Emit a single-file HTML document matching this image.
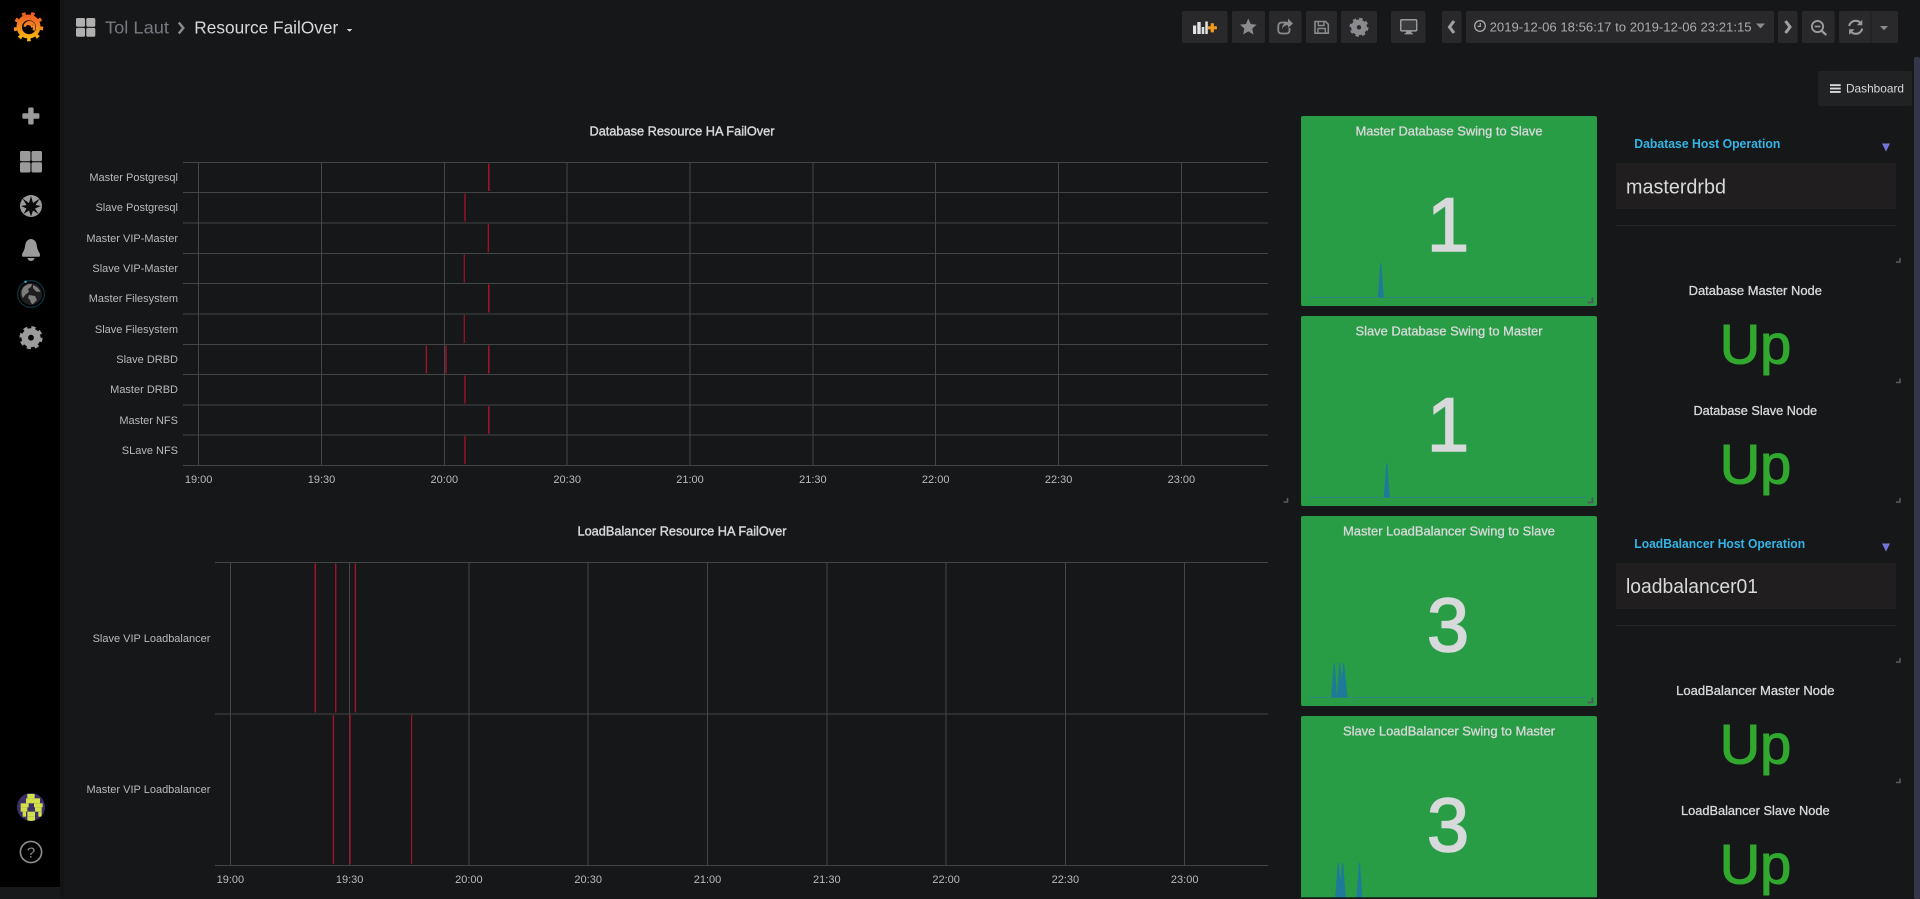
<!DOCTYPE html>
<html lang="en">
<head>
<meta charset="utf-8">
<title>Resource FailOver</title>
<style>
html,body{margin:0;padding:0;width:1920px;height:899px;overflow:hidden;background:#161719}
svg{position:absolute;left:0;top:0;display:block}
text{font-family:"Liberation Sans",Arial,sans-serif}
.lb{font-size:11px;fill:#b7babd;text-anchor:end}
.tk{font-size:11px;fill:#b7babd;text-anchor:middle}
.ti{font-size:13px;fill:#d8d9da;stroke:#d8d9da;stroke-width:.3px;text-anchor:middle}
.gt{font-size:13px;fill:#d8d9da;text-anchor:middle}
.big{font-size:76px;fill:#d8d9da;stroke:#d8d9da;stroke-width:1.6px;text-anchor:middle}
.up{font-size:56px;fill:#31a82e;stroke:#31a82e;stroke-width:1.1px;text-anchor:middle}
.hd{font-size:13px;font-weight:bold;fill:#33b5e5}
.inp{font-size:20px;fill:#d8d9da}
.btn{fill:#29292b}
.g line{stroke:#444546;stroke-width:1}
.r rect{fill:#9c1428}
.h{fill:none;stroke:#5a5b5d;stroke-width:1.6}
.hg{fill:none;stroke:#50585a;stroke-width:1.8}
.sp{fill:#1f7a9a}
.bl{stroke:#2b8b78;stroke-width:1}
</style>
</head>
<body>
<svg width="1920" height="899" viewBox="0 0 1920 899" xmlns="http://www.w3.org/2000/svg">
<defs>
<linearGradient id="lg" gradientUnits="userSpaceOnUse" x1="28" y1="10" x2="28" y2="43">
<stop offset="0" stop-color="#ee4f26"/><stop offset=".55" stop-color="#f58a1f"/><stop offset="1" stop-color="#fbca0a"/>
</linearGradient>
<clipPath id="av"><circle cx="31" cy="807" r="14"/></clipPath>
</defs>

<!-- backgrounds -->
<rect width="1920" height="899" fill="#161719"/>
<rect x="60" width="4" height="899" fill="#131416"/>
<rect width="60" height="887" fill="#000"/>
<rect y="887" width="60" height="12" fill="#18191b"/>

<!-- grafana logo -->
<circle cx="28.5" cy="26.5" r="12" fill="url(#lg)"/>
<circle cx="28.5" cy="26.5" r="13.2" fill="none" stroke="url(#lg)" stroke-width="3.2" stroke-dasharray="3.6 5.6"/>
<circle cx="29" cy="27.2" r="7" fill="#000"/>
<path d="M33.2 30.2A4.9 4.9 0 1 0 24.6 26.6A3.9 3.9 0 0 1 32.2 27.6" fill="none" stroke="url(#lg)" stroke-width="2.3"/>

<!-- sidebar icons -->
<g fill="#9b9b9b">
<rect x="28.2" y="107.5" width="5.4" height="17" rx="1"/>
<rect x="22.4" y="113.3" width="17" height="5.4" rx="1"/>
<rect x="20" y="151" width="10.5" height="10.2" rx="1.5"/>
<rect x="31.5" y="151" width="10.5" height="10.2" rx="1.5"/>
<rect x="20" y="162.3" width="10.5" height="10.2" rx="1.5"/>
<rect x="31.5" y="162.3" width="10.5" height="10.2" rx="1.5"/>
<circle cx="31" cy="206" r="11"/>
<path d="M22.5 253C24.5 250 25 247 25.3 245C25.6 241.5 28 239.2 31 239C34 239.2 36.4 241.5 36.7 245C37 247 37.5 250 39.5 253C40.3 254.5 40 256.8 39 256.8H23C22 256.8 21.7 254.5 22.5 253Z"/>
<path d="M27.5 258H34.5A3.5 3 0 0 1 27.5 258Z"/>
</g>
<path d="M31 196L33 203L40 198.5L35.5 205L41 206L35 208.5L38.5 214L33 210.5L31 216.5L29 210.5L23.5 214L26.5 208.5L21 206L26.5 205L22.5 198.5L29 203Z" fill="#0a0a0a"/>
<circle cx="31" cy="294" r="13.4" fill="none" stroke="#0d3540" stroke-width="1.2"/>
<circle cx="25.5" cy="281.8" r="1.2" fill="#33b5e5"/>
<circle cx="31" cy="294" r="11" fill="#1e1e1e"/>
<path d="M23 288C25 285 29 283.5 32 284L31 287L28 289L29 292L25.5 294.5L23 298C21 295 21 291 23 288ZM33 285C36 286 39.5 289 40.5 292L36 291.5L33 288ZM29 295L35 296L37 300L33 304C31.5 304.5 30.5 302 30 300L28 298Z" fill="#7c7c7c"/>
<circle cx="31" cy="337.7" r="6.2" fill="none" stroke="#9b9b9b" stroke-width="6.6"/>
<circle cx="31" cy="337.7" r="9.8" fill="none" stroke="#9b9b9b" stroke-width="3.6" stroke-dasharray="4 3.7"/>

<!-- avatar -->
<g clip-path="url(#av)">
<rect x="17" y="793" width="28" height="28" fill="#3b2f6a"/>
<g transform="translate(0 770) scale(.3333)" fill="#d2e04b">
<rect x="82" y="72" width="22" height="13"/>
<rect x="78" y="85" width="42" height="15"/>
<rect x="62" y="100" width="16" height="12"/>
<rect x="78" y="100" width="8" height="12"/>
<rect x="102" y="100" width="26" height="12"/>
<rect x="62" y="112" width="20" height="13"/>
<rect x="105" y="112" width="20" height="13"/>
<rect x="68" y="125" width="10" height="15"/>
<rect x="82" y="125" width="23" height="15"/>
<rect x="115" y="125" width="10" height="15"/>
<rect x="82" y="140" width="23" height="15"/>
</g>
</g>
<!-- help -->
<circle cx="31" cy="852" r="10.6" fill="none" stroke="#8e8e8e" stroke-width="1.6"/>
<text x="31" y="857.5" font-size="15" fill="#8e8e8e" text-anchor="middle">?</text>

<!-- header -->
<g fill="#b0b0b0">
<rect x="76" y="18" width="9" height="8.8" rx="1.5"/>
<rect x="86.3" y="18" width="9" height="8.8" rx="1.5"/>
<rect x="76" y="27.9" width="9" height="8.8" rx="1.5"/>
<rect x="86.3" y="27.9" width="9" height="8.8" rx="1.5"/>
</g>
<text x="105" y="33.3" font-size="17.5" fill="#767980" textLength="64" lengthAdjust="spacingAndGlyphs">Tol Laut</text>
<path d="M178.8 22.5L183.3 28L178.8 33.5" fill="none" stroke="#8a8c90" stroke-width="2.4"/>
<text x="194.3" y="33.3" font-size="17.5" fill="#d8d9da" textLength="144" lengthAdjust="spacingAndGlyphs">Resource FailOver</text>
<path d="M346.7 29H352.3L349.5 31.8Z" fill="#d8d9da"/>

<!-- toolbar buttons -->
<rect class="btn" x="1182" y="11" width="45.5" height="32" rx="2"/>
<rect class="btn" x="1232" y="11" width="33" height="32" rx="2"/>
<rect class="btn" x="1269" y="11" width="32.5" height="32" rx="2"/>
<rect class="btn" x="1306" y="11" width="31" height="32" rx="2"/>
<rect class="btn" x="1341" y="11" width="36" height="32" rx="2"/>
<rect class="btn" x="1391" y="11" width="34.5" height="32" rx="2"/>
<rect class="btn" x="1442" y="11" width="19.5" height="32" rx="2"/>
<rect class="btn" x="1466" y="11" width="308" height="32" rx="2"/>
<rect class="btn" x="1778" y="11" width="19.5" height="32" rx="2"/>
<rect class="btn" x="1802" y="11" width="32.5" height="32" rx="2"/>
<rect class="btn" x="1839" y="11" width="59" height="32" rx="2"/>
<rect x="1870.5" y="11" width="1" height="32" fill="#1f2022"/>

<!-- toolbar icons -->
<g fill="#e2e2e2">
<rect x="1193" y="25.5" width="3.2" height="8.5"/>
<rect x="1197.3" y="22" width="3.4" height="12"/>
<rect x="1201.7" y="27" width="2.6" height="7"/>
<rect x="1205.3" y="21.5" width="2.5" height="12.5"/>
</g>
<path d="M1210.7 23.2h3.2v3h3v3.2h-3v3h-3.2v-3h-3v-3.2h3z" fill="#f29a1f"/>
<path d="M1248.3 18.5L1250.7 24L1256.6 24.6L1252.2 28.6L1253.5 34.5L1248.3 31.4L1243.1 34.5L1244.4 28.6L1240 24.6L1245.9 24Z" fill="#8a8b8e"/>
<path d="M1287 22.5H1282C1279.5 22.5 1278.3 23.7 1278.3 26V30.5C1278.3 32.8 1279.5 33.5 1282 33.5H1286C1288.3 33.5 1289.5 32.5 1289.5 30.5V28" fill="none" stroke="#8a8b8e" stroke-width="1.8"/>
<path d="M1288 18.5L1293 23.5L1288 28V25.3C1285 25.3 1283 26.5 1282 29.5C1282 25 1284.5 22 1288 21.7Z" fill="#8a8b8e"/>
<path d="M1315 21.5H1325.5L1328.3 24.3V33.2H1315Z" fill="none" stroke="#8a8b8e" stroke-width="1.6"/>
<path d="M1318.3 21.5V25.5H1324V21.5M1318 33V28.5H1325.3V33" fill="none" stroke="#8a8b8e" stroke-width="1.4"/>
<circle cx="1359" cy="27.3" r="5" fill="none" stroke="#8a8b8e" stroke-width="5.6"/>
<circle cx="1359" cy="27.3" r="8" fill="none" stroke="#8a8b8e" stroke-width="3" stroke-dasharray="3.2 3.08"/>
<rect x="1400.8" y="19.8" width="15.8" height="11" rx="1" fill="none" stroke="#9a9b9e" stroke-width="1.6"/>
<rect x="1401.5" y="20.5" width="14.5" height="9.6" fill="#3a3b3d"/>
<path d="M1406 31H1411.5V33.2H1413V34.4H1404.5V33.2H1406Z" fill="#9a9b9e"/>
<path d="M1454 21L1449.5 27L1454 33" fill="none" stroke="#a0a1a4" stroke-width="3"/>
<path d="M1785.5 21L1790 27L1785.5 33" fill="none" stroke="#a0a1a4" stroke-width="3"/>
<circle cx="1480" cy="26" r="5.3" fill="none" stroke="#a8a9ac" stroke-width="1.3"/>
<path d="M1480.3 23V26.4H1477.6" fill="none" stroke="#a8a9ac" stroke-width="1.2"/>
<text x="1489.6" y="31.3" font-size="13" fill="#a9abae" textLength="262" lengthAdjust="spacingAndGlyphs">2019-12-06 18:56:17 to 2019-12-06 23:21:15</text>
<path d="M1756 23.5H1765L1760.5 28.5Z" fill="#8a8b8e"/>
<circle cx="1817.5" cy="26.5" r="5.6" fill="none" stroke="#9a9b9e" stroke-width="1.9"/>
<path d="M1814.7 26.5H1820.3" stroke="#9a9b9e" stroke-width="1.7"/>
<path d="M1821.5 30.8L1826.3 35" stroke="#9a9b9e" stroke-width="2.3"/>
<path d="M1849.2 26C1850 22.8 1852.6 20.8 1855.7 20.8C1857.8 20.8 1859.4 21.6 1860.6 23" fill="none" stroke="#9a9b9e" stroke-width="2.1"/>
<path d="M1862.2 28.6C1861.4 31.8 1858.8 33.8 1855.7 33.8C1853.6 33.8 1852 33 1850.8 31.6" fill="none" stroke="#9a9b9e" stroke-width="2.1"/>
<path d="M1862.3 19.8V25.3H1856.8ZM1849.1 34.8V29.3H1854.6Z" fill="#9a9b9e"/>
<path d="M1880 26H1888L1884 30.2Z" fill="#8a8b8e"/>

<!-- dashboard button -->
<rect x="1818" y="71" width="94" height="35" rx="2" fill="#212224"/>
<g fill="#d8d9da">
<rect x="1830" y="84.2" width="10.7" height="1.9"/>
<rect x="1830" y="87.6" width="10.7" height="1.9"/>
<rect x="1830" y="91" width="10.7" height="1.9"/>
</g>
<text x="1846" y="92.6" font-size="12" fill="#d8d9da" textLength="58" lengthAdjust="spacingAndGlyphs">Dashboard</text>

<!-- scrollbar -->
<rect x="1914" y="57" width="6" height="842" rx="2" fill="#34364a"/>

<!-- chart 1 -->
<text class="gt" x="682" y="135.3" textLength="185" lengthAdjust="spacingAndGlyphs" stroke="#d8d9da" stroke-width=".4">Database Resource HA FailOver</text>
<g class="g">
<line x1="183" x2="1268" y1="162.5" y2="162.5"/>
<line x1="183" x2="1268" y1="192.5" y2="192.5"/>
<line x1="183" x2="1268" y1="223" y2="223"/>
<line x1="183" x2="1268" y1="253.5" y2="253.5"/>
<line x1="183" x2="1268" y1="283.5" y2="283.5"/>
<line x1="183" x2="1268" y1="314" y2="314"/>
<line x1="183" x2="1268" y1="344.5" y2="344.5"/>
<line x1="183" x2="1268" y1="374.5" y2="374.5"/>
<line x1="183" x2="1268" y1="405" y2="405"/>
<line x1="183" x2="1268" y1="435" y2="435"/>
<line x1="183" x2="1268" y1="465.5" y2="465.5"/>
<line x1="198.5" x2="198.5" y1="162" y2="465"/>
<line x1="321.5" x2="321.5" y1="162" y2="465"/>
<line x1="444.5" x2="444.5" y1="162" y2="465"/>
<line x1="567" x2="567" y1="162" y2="465"/>
<line x1="690" x2="690" y1="162" y2="465"/>
<line x1="813" x2="813" y1="162" y2="465"/>
<line x1="935.5" x2="935.5" y1="162" y2="465"/>
<line x1="1058.5" x2="1058.5" y1="162" y2="465"/>
<line x1="1181.5" x2="1181.5" y1="162" y2="465"/>
</g>
<g class="r">
<rect x="488" y="163.5" width="1.6" height="27.5"/>
<rect x="464.3" y="193.5" width="1.4" height="28"/>
<rect x="487.7" y="224" width="1.4" height="28"/>
<rect x="463.7" y="254.5" width="1.2" height="28"/>
<rect x="488" y="284.5" width="1.6" height="28"/>
<rect x="463.7" y="315" width="1.2" height="28"/>
<rect x="425.7" y="345.5" width="1.4" height="28"/>
<rect x="445.3" y="345.5" width="1.4" height="28"/>
<rect x="488" y="345.5" width="1.6" height="28"/>
<rect x="464.3" y="375.5" width="1.4" height="28"/>
<rect x="488" y="406" width="1.6" height="28"/>
<rect x="464.3" y="436" width="1.4" height="28"/>
</g>
<text class="lb" x="178" y="181">Master Postgresql</text>
<text class="lb" x="178" y="211">Slave Postgresql</text>
<text class="lb" x="178" y="242">Master VIP-Master</text>
<text class="lb" x="178" y="272">Slave VIP-Master</text>
<text class="lb" x="178" y="302">Master Filesystem</text>
<text class="lb" x="178" y="333">Slave Filesystem</text>
<text class="lb" x="178" y="363">Slave DRBD</text>
<text class="lb" x="178" y="393">Master DRBD</text>
<text class="lb" x="178" y="424">Master NFS</text>
<text class="lb" x="178" y="454">SLave NFS</text>
<text class="tk" x="198.6" y="483">19:00</text>
<text class="tk" x="321.5" y="483">19:30</text>
<text class="tk" x="444.3" y="483">20:00</text>
<text class="tk" x="567.2" y="483">20:30</text>
<text class="tk" x="690" y="483">21:00</text>
<text class="tk" x="812.9" y="483">21:30</text>
<text class="tk" x="935.7" y="483">22:00</text>
<text class="tk" x="1058.6" y="483">22:30</text>
<text class="tk" x="1181.4" y="483">23:00</text>
<path class="h" d="M1287.5 498V502H1283.5"/>

<!-- chart 2 -->
<text class="gt" x="682" y="535.3" textLength="209" lengthAdjust="spacingAndGlyphs" stroke="#d8d9da" stroke-width=".4">LoadBalancer Resource HA FailOver</text>
<g class="g">
<line x1="215" x2="1268" y1="562.5" y2="562.5"/>
<line x1="215" x2="1268" y1="714" y2="714"/>
<line x1="215" x2="1268" y1="865.5" y2="865.5"/>
<line x1="230.5" x2="230.5" y1="562" y2="865"/>
<line x1="349.5" x2="349.5" y1="562" y2="865"/>
<line x1="469" x2="469" y1="562" y2="865"/>
<line x1="588" x2="588" y1="562" y2="865"/>
<line x1="707.5" x2="707.5" y1="562" y2="865"/>
<line x1="827" x2="827" y1="562" y2="865"/>
<line x1="946" x2="946" y1="562" y2="865"/>
<line x1="1065.5" x2="1065.5" y1="562" y2="865"/>
<line x1="1184.5" x2="1184.5" y1="562" y2="865"/>
</g>
<g class="r">
<rect x="314.5" y="563.5" width="1.6" height="149"/>
<rect x="335" y="563.5" width="1.4" height="149"/>
<rect x="354.7" y="563.5" width="1.4" height="149"/>
<rect x="332.7" y="715" width="1.4" height="149"/>
<rect x="349.4" y="715" width="1.4" height="149"/>
<rect x="411" y="715" width="1.2" height="149"/>
</g>
<text class="lb" x="210.4" y="642">Slave VIP Loadbalancer</text>
<text class="lb" x="210.4" y="793">Master VIP Loadbalancer</text>
<text class="tk" x="230.4" y="883">19:00</text>
<text class="tk" x="349.6" y="883">19:30</text>
<text class="tk" x="468.9" y="883">20:00</text>
<text class="tk" x="588.2" y="883">20:30</text>
<text class="tk" x="707.5" y="883">21:00</text>
<text class="tk" x="826.8" y="883">21:30</text>
<text class="tk" x="946.1" y="883">22:00</text>
<text class="tk" x="1065.4" y="883">22:30</text>
<text class="tk" x="1184.7" y="883">23:00</text>

<!-- green panels -->
<rect x="1301" y="116" width="296" height="190" rx="2" fill="#299c46"/>
<rect x="1301" y="316" width="296" height="190" rx="2" fill="#299c46"/>
<rect x="1301" y="516" width="296" height="190" rx="2" fill="#299c46"/>
<rect x="1301" y="716" width="296" height="190" rx="2" fill="#299c46"/>

<text class="ti" x="1449" y="135.3" textLength="187" lengthAdjust="spacingAndGlyphs">Master Database Swing to Slave</text>
<text class="ti" x="1449" y="335.3" textLength="187" lengthAdjust="spacingAndGlyphs">Slave Database Swing to Master</text>
<text class="ti" x="1449" y="535.3" textLength="212" lengthAdjust="spacingAndGlyphs">Master LoadBalancer Swing to Slave</text>
<text class="ti" x="1449" y="735.3" textLength="212" lengthAdjust="spacingAndGlyphs">Slave LoadBalancer Swing to Master</text>

<text class="big" x="1448" y="251">1</text>
<text class="big" x="1448" y="451">1</text>
<text class="big" x="1448" y="651.5">3</text>
<text class="big" x="1448" y="851.5">3</text>

<line class="bl" x1="1309" x2="1588" y1="297.5" y2="297.5"/>
<line class="bl" x1="1309" x2="1588" y1="497.5" y2="497.5"/>
<line class="bl" x1="1309" x2="1588" y1="697.5" y2="697.5"/>
<polygon class="sp" points="1377.8,297.5 1380.3,263 1381.3,263 1383.8,297.5"/>
<polygon class="sp" points="1383.8,497.5 1386.3,463 1387.3,463 1389.8,497.5"/>
<polygon class="sp" points="1331.2,697.5 1333.7,663 1334.7,663 1337,697.5"/>
<polygon class="sp" points="1337,697.5 1339.3,663 1340.3,663 1341.7,680 1343.2,663 1344.2,663 1347.5,697.5"/>
<polygon class="sp" points="1335.2,898 1337.7,863 1338.7,863 1340.3,880 1342.1,863 1343.1,863 1346,898"/>
<polygon class="sp" points="1356.5,898 1359,863 1360,863 1362.5,898"/>

<path class="hg" d="M1592.5 297.5V302.5H1587.5"/>
<path class="hg" d="M1592.5 497.5V502.5H1587.5"/>
<path class="hg" d="M1592.5 697.5V702.5H1587.5"/>

<!-- right column -->
<text class="hd" x="1634.3" y="148" textLength="146" lengthAdjust="spacingAndGlyphs">Dabatase Host Operation</text>
<path d="M1882 143.5H1890L1886 151.5Z" fill="#7474d8"/>
<rect x="1616" y="163" width="280" height="46" fill="#201e1e"/>
<text class="inp" x="1626" y="193.3" textLength="100" lengthAdjust="spacingAndGlyphs">masterdrbd</text>
<rect x="1616" y="225" width="280" height="1" fill="#232427"/>
<path class="h" d="M1900 258V262H1896"/>

<text class="ti" x="1755.3" y="295" textLength="133.4" lengthAdjust="spacingAndGlyphs">Database Master Node</text>
<text class="up" x="1755.5" y="363.3">Up</text>
<path class="h" d="M1900 378.5V382.5H1896"/>
<text class="ti" x="1755.3" y="415" textLength="123.7" lengthAdjust="spacingAndGlyphs">Database Slave Node</text>
<text class="up" x="1755.5" y="483.3">Up</text>
<path class="h" d="M1900 498V502H1896"/>

<text class="hd" x="1634.3" y="548" textLength="170.8" lengthAdjust="spacingAndGlyphs">LoadBalancer Host Operation</text>
<path d="M1882 543.5H1890L1886 551.5Z" fill="#7474d8"/>
<rect x="1616" y="563" width="280" height="46" fill="#201e1e"/>
<text class="inp" x="1626" y="593" textLength="132" lengthAdjust="spacingAndGlyphs">loadbalancer01</text>
<rect x="1616" y="625" width="280" height="1" fill="#232427"/>
<path class="h" d="M1900 658V662H1896"/>

<text class="ti" x="1755.3" y="695" textLength="158.3" lengthAdjust="spacingAndGlyphs">LoadBalancer Master Node</text>
<text class="up" x="1755.5" y="763.3">Up</text>
<path class="h" d="M1900 778.5V782.5H1896"/>
<text class="ti" x="1755.3" y="815" textLength="148.6" lengthAdjust="spacingAndGlyphs">LoadBalancer Slave Node</text>
<text class="up" x="1755.5" y="883.3">Up</text>

<!-- bottom edge -->
<rect x="60" y="897.3" width="1854" height="2" fill="#161719"/>
</svg>
</body>
</html>
